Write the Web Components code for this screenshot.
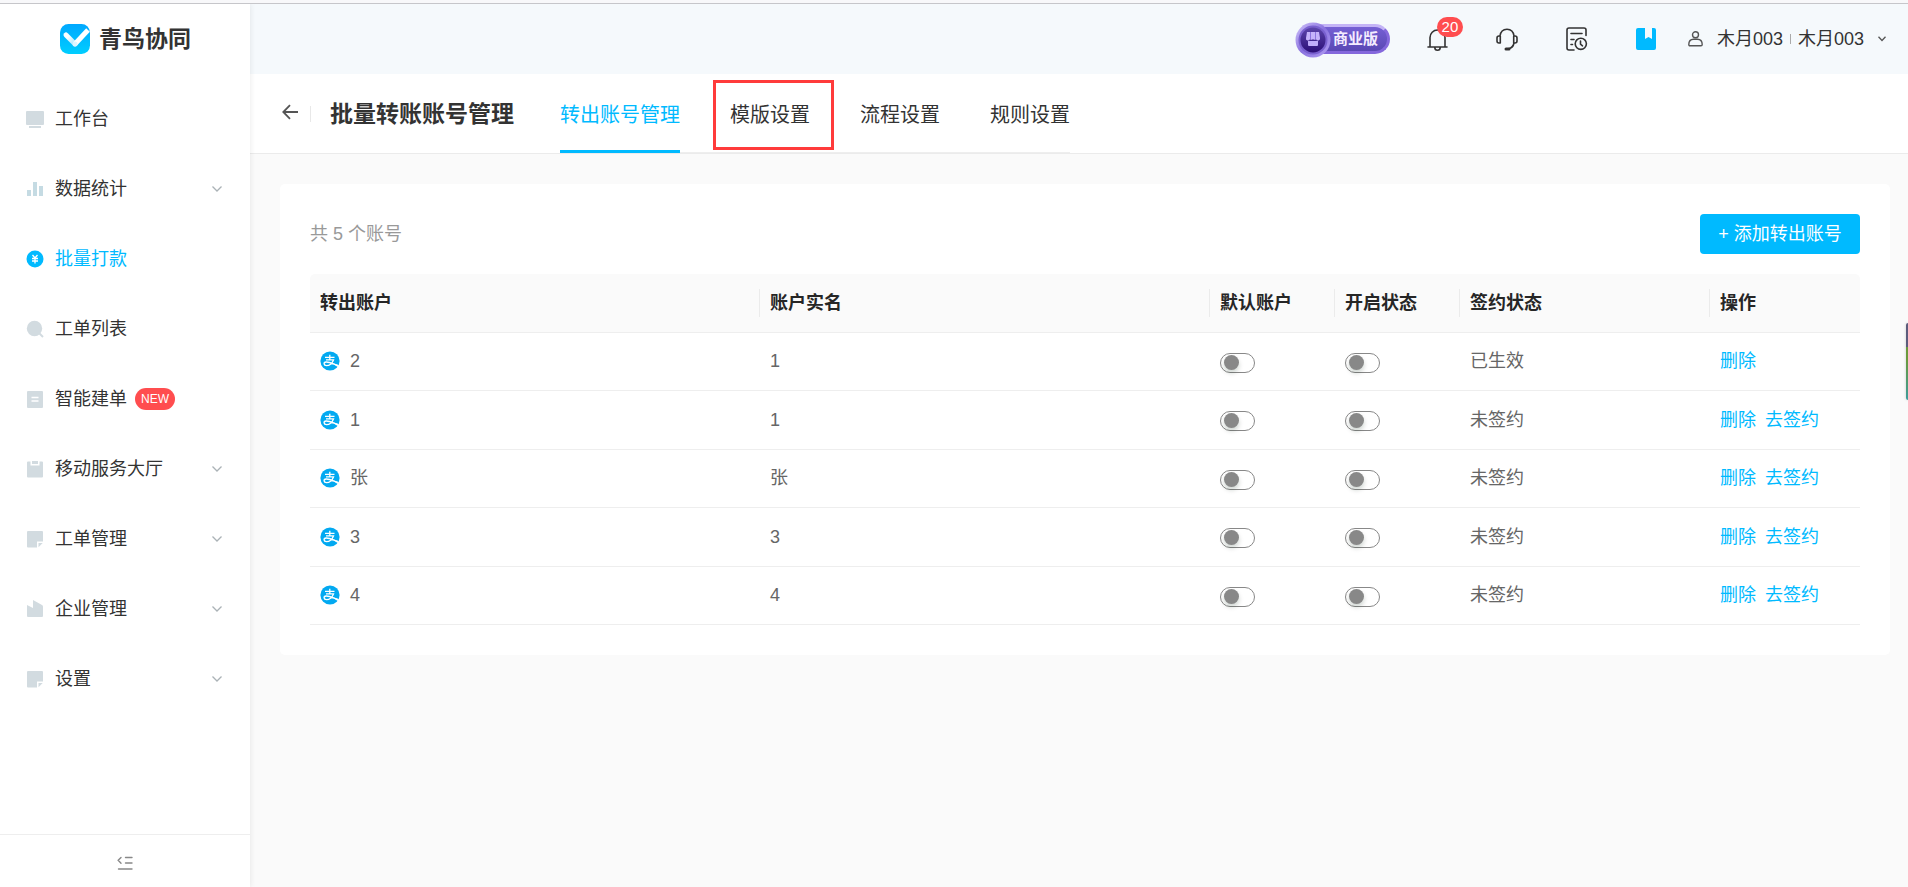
<!DOCTYPE html>
<html lang="zh-CN">
<head>
<meta charset="utf-8">
<title>批量转账账号管理</title>
<style>
  html, body { margin: 0; height: 100%; }
  body {
    font: 18px/26px "Liberation Sans", "Noto Sans CJK SC", sans-serif;
    color: #333;
    background: #fafafa;
    --brand: #00baff;
    --line: #eee;
    --danger: #ff4d4f;
  }
</style>
</head>
<body>
<app-shell>
  <side-bar slot="side">
    <nav-item icon="desk">工作台</nav-item>
    <nav-item icon="bars" expandable>数据统计</nav-item>
    <nav-item icon="coin" active>批量打款</nav-item>
    <nav-item icon="search">工单列表</nav-item>
    <nav-item icon="doc" tag="NEW">智能建单</nav-item>
    <nav-item icon="clip" expandable>移动服务大厅</nav-item>
    <nav-item icon="note" expandable>工单管理</nav-item>
    <nav-item icon="firm" expandable>企业管理</nav-item>
    <nav-item icon="note" expandable>设置</nav-item>
  </side-bar>
  <top-bar slot="top"></top-bar>
  <page-head slot="head">
    <span slot="title">批量转账账号管理</span>
    <tab-link active>转出账号管理</tab-link>
    <tab-link marked>模版设置</tab-link>
    <tab-link>流程设置</tab-link>
    <tab-link>规则设置</tab-link>
  </page-head>
  <account-card></account-card>
</app-shell>

<script>
const define = (name, html, setup) => {
  const template = document.createElement('template');
  template.innerHTML = html;
  customElements.define(name, class extends HTMLElement {
    connectedCallback() {
      if (this.shadowRoot) return;
      const root = this.attachShadow({ mode: 'open' });
      root.append(template.content.cloneNode(true));
      if (setup) setup(this, root);
    }
  });
};

define('app-shell', `
<style>
  :host { display: flex; flex-direction: column; min-height: 100vh; }
  .strip { height: 3px; background: #f8f8fa; border-bottom: 1px solid #c6c6ca; }
  .cols { flex: 1; display: grid; grid-template-columns: 250px minmax(0, 1fr); }
  .main { background: #fafafa; }
  .body { padding: 30px 18px 30px 30px; }
  .handle {
    position: fixed; right: 0; top: 323px; width: 2px; height: 77px;
    border-radius: 2px 0 0 2px;
    background: linear-gradient(#5c5c7c 24px, #6a9a3c 24px 36px, #3c9c9c);
    box-shadow: 0 0 3px #0003;
  }
</style>
<div class="strip"></div>
<div class="cols">
  <slot name="side"></slot>
  <div class="main">
    <slot name="top"></slot>
    <slot name="head"></slot>
    <div class="body"><slot></slot></div>
  </div>
</div>
<div class="handle"></div>`);

define('side-bar', `
<style>
  :host {
    display: flex; flex-direction: column; background: #fff;
    position: relative; z-index: 1; box-shadow: 0 0 6px #00000018; clip-path: inset(0 -8px 0 0);
  }
  .logo { display: flex; align-items: center; gap: 9px; height: 70px; padding: 0 60px; }
  .logo svg { flex: none; }
  .logo strong { font-size: 23px; line-height: 30px; white-space: nowrap; }
  nav { flex: 1; padding-top: 10px; }
  footer { height: 53px; padding-top: 4px; box-sizing: border-box; border-top: 1px solid var(--line); display: grid; place-items: center; }
  button { border: 0; padding: 6px; background: none; display: flex; cursor: pointer; }
</style>
<div class="logo">
  <svg width="30" height="30" viewBox="0 0 30 30" aria-hidden="true">
    <defs>
      <linearGradient id="g" x1="0" y1="0" x2="0" y2="1"><stop offset="0" stop-color="#00a8ff"/><stop offset="1" stop-color="#00ceff"/></linearGradient>
      <linearGradient id="w" x1="0" y1="0" x2="1" y2="1"><stop offset=".2" stop-color="#fff"/><stop offset="1" stop-color="#a5e5ff"/></linearGradient>
    </defs>
    <rect width="30" height="30" rx="8.500" fill="url(#g)"/>
    <path d="M6 11l9 9" stroke="url(#w)" stroke-width="5" stroke-linecap="round"/>
    <path d="M15 20L28 6" stroke="#fff" stroke-width="5"/>
    <circle cx="15" cy="20" r="2.500" fill="#dff6ff"/>
  </svg>
  <strong>青鸟协同</strong>
</div>
<nav><slot></slot></nav>
<footer>
  <button aria-label="收起菜单">
    <svg width="16" height="15" viewBox="0 0 16 15" fill="none" stroke="#888" stroke-width="1.400" stroke-linecap="round">
      <path d="M8.500 1.500H15M8.500 7H15M1.500 13H15M4 1.500L1.200 4.300 4 7.200"/>
    </svg>
  </button>
</footer>`);

const navIcons = {
  desk: '<path d="M1 1h16a1 1 0 011 1v12a1 1 0 01-1 1H1a1 1 0 01-1-1V2a1 1 0 011-1zM3 16h12v2H3z"/>',
  bars: '<path fill="#c5dbe3" d="M1 10h4v6H1zM7 2h4v14H7zM13 6h4v10h-4z"/>',
  coin: '<circle cx="9" cy="9" r="8.500"/><path d="M6.500 5L9 8l2.500-3M6 8.500h6M6 11h6M9 8v5.500" stroke="#fff" stroke-width="1.300" fill="none"/>',
  search: '<circle cx="8.500" cy="8.500" r="7.700"/><path d="M13 13l4 4" stroke="currentColor" stroke-width="2"/>',
  doc: '<path d="M2 1h14a1 1 0 011 1v15a1 1 0 01-1 1H2a1 1 0 01-1-1V2a1 1 0 011-1z"/><path d="M5.500 7.500h7M5.500 11h7" stroke="#fff" stroke-width="1.300"/>',
  clip: '<path d="M6 1h6v3H6z"/><path d="M2 1.500h2.500v4h9v-4H16a1 1 0 011 1V16.500a1 1 0 01-1 1H2a1 1 0 01-1-1V2.500a1 1 0 011-1z"/>',
  note: '<path d="M2 1h14a1 1 0 011 1v9.500h-6v6H2a1 1 0 01-1-1V2a1 1 0 011-1zM12.500 13h4.200l-4.200 4.300z"/>',
  firm: '<path d="M1 5l6 3V0l9 5a2 2 0 011 2v9a1 1 0 01-1 1H2a1 1 0 01-1-1z"/>'
};

define('nav-item', `
<style>
  :host { display: block; }
  a { display: flex; align-items: center; height: 70px; padding: 0 28px 0 26px; color: #333; text-decoration: none; white-space: nowrap; }
  .icon { flex: none; margin-right: 11px; color: #d2dbe0; fill: currentColor; }
  .tag { margin-left: 8px; width: 40px; border-radius: 11px; background: var(--danger); color: #fff; font-size: 12px; line-height: 22px; text-align: center; }
  .more { margin-left: auto; }
  :host([active]) a, :host([active]) .icon { color: var(--brand); }
</style>
<a href="#"><svg class="icon" width="18" height="18" viewBox="0 0 18 18" aria-hidden="true"></svg><slot></slot></a>`,
(host, root) => {
  const link = root.querySelector('a');
  root.querySelector('.icon').innerHTML = navIcons[host.getAttribute('icon')];
  if (host.hasAttribute('tag')) link.insertAdjacentHTML('beforeend', `<span class="tag">${host.getAttribute('tag')}</span>`);
  if (host.hasAttribute('expandable')) link.insertAdjacentHTML('beforeend',
    '<svg class="more" width="10" height="6" viewBox="0 0 10 6" fill="none" stroke="#aab2b6" stroke-width="1.300" aria-hidden="true"><path d="M.5.5L5 5 9.500.5"/></svg>');
});

define('top-bar', `
<style>
  :host { display: flex; align-items: center; justify-content: flex-end; height: 70px; padding-right: 22px; background: #f5f9fc; }
  button { position: relative; display: flex; padding: 0; border: 0; background: none; font: inherit; color: #333; cursor: pointer; }
  .plan {
    position: relative; box-sizing: border-box; height: 30px; width: 90px; margin-right: 37px; padding-left: 30px;
    border-radius: 15px; border: 3px solid #8468dc; border-top-color: #c4b4f6;
    background: linear-gradient(#7560d4, #5a48b4);
    color: #f4ecff; font-size: 15px; font-weight: bold; line-height: 24px; white-space: nowrap;
  }
  .plan svg { position: absolute; left: -8px; top: -5px; }
  .count {
    position: absolute; left: 10px; top: -11px; width: 26px; border-radius: 10px;
    background: var(--danger); color: #fff; font-size: 15px; line-height: 20px; text-align: center;
  }
  .tool { margin-right: 48px; }
  .book { margin-right: 32px; }
  .user { align-items: center; gap: 14px; white-space: nowrap; line-height: 26px; }
  .names { display: flex; align-items: center; gap: 7px; }
  .names i { width: 1px; height: 10px; background: #aaa; }
</style>
<div class="plan">
  <svg width="36" height="36" viewBox="0 0 36 36" aria-hidden="true">
    <defs>
      <linearGradient id="r" x1="0" y1="0" x2="1" y2="1"><stop offset="0" stop-color="#d2c6fb"/><stop offset=".5" stop-color="#8a72df"/><stop offset="1" stop-color="#b3a0f3"/></linearGradient>
      <linearGradient id="d" x1="0" y1="0" x2="0" y2="1"><stop offset="0" stop-color="#5c45ab"/><stop offset="1" stop-color="#2c0f78"/></linearGradient>
    </defs>
    <circle cx="18" cy="18" r="17.500" fill="url(#r)"/>
    <circle cx="18" cy="18" r="14.500" fill="#7960cf"/>
    <circle cx="18" cy="18" r="12.500" fill="url(#d)"/>
    <path d="M12 10h12l1 6a2 2 0 01-4 1 2 2 0 01-3 0 2 2 0 01-3 0 2 2 0 01-4-1z" fill="#c5b3fb"/>
    <path d="M15.500 10v7M20.500 10v7" stroke="#8c74df"/>
    <path d="M13 19h10v4a1 1 0 01-1 1h-8a1 1 0 01-1-1z" fill="#c0adfa"/>
  </svg>商业版
</div>
<button class="tool" aria-label="消息">
  <svg width="21" height="23" viewBox="0 0 21 23" fill="none" stroke="#333" stroke-width="1.600" stroke-linecap="round" stroke-linejoin="round">
    <path d="M3 19V9.500a7.500 7.500 0 0115 0V19M1 19h19M7.800 19.500a2.700 2.700 0 005.400 0"/>
  </svg>
  <span class="count">20</span>
</button>
<button class="tool" aria-label="客服">
  <svg width="22" height="23" viewBox="0 0 22 23" fill="none" stroke="#333" stroke-width="1.600" stroke-linecap="round" stroke-linejoin="round">
    <path d="M4 8C4.500 4 7 1.200 11 1.200S17.500 4 18 8M4.300 8v7H3a2 2 0 01-2-2v-3a2 2 0 012-2zM17.700 8v7H19a2 2 0 002-2v-3a2 2 0 00-2-2zM18 15c-.5 3-2.500 5-5.500 5.800"/>
    <path d="M10 21h3" stroke-width="3"/>
  </svg>
</button>
<button class="tool" aria-label="记录">
  <svg width="22" height="24" viewBox="0 0 22 24" fill="none" stroke="#333" stroke-width="1.600" stroke-linecap="round" stroke-linejoin="round">
    <path d="M20 8.500V3a2 2 0 00-2-2H3a2 2 0 00-2 2v18a2 2 0 002 2h5M5 6.500h11M5 12.500h3M5 17.500h1.500"/>
    <circle cx="14.800" cy="16.800" r="5.600"/><path d="M14.500 14v3.200l2 1.600"/>
  </svg>
</button>
<button class="book" aria-label="帮助文档">
  <svg width="20" height="22" viewBox="0 0 20 22" fill="#00baff"><path d="M2 0h7v11l3.500-2L16 11V0h2a2 2 0 012 2v18a2 2 0 01-2 2H2a2 2 0 01-2-2V2a2 2 0 012-2z"/></svg>
</button>
<button class="user">
  <svg width="15" height="16" viewBox="0 0 15 16" fill="none" stroke="#555" stroke-width="1.400" aria-hidden="true">
    <circle cx="7.500" cy="3.800" r="3"/><path d="M5.500 8.200h4c3 0 4.700 2.400 4.700 5.300 0 .8-.4 1.300-1.200 1.300H2c-.8 0-1.200-.5-1.200-1.300 0-2.900 1.700-5.300 4.700-5.300z"/>
  </svg>
  <span class="names"><span>木月003</span><i></i><span>木月003</span></span>
  <svg width="8" height="6" viewBox="0 0 8 6" fill="none" stroke="#555" stroke-width="1.300" aria-hidden="true"><path d="M.5.8L4 4.500 7.500.8"/></svg>
</button>`);

define('page-head', `
<style>
  :host { display: flex; align-items: center; height: 79px; padding-left: 30px; background: #fff; border-bottom: 1px solid #ebebeb; }
  button { display: flex; padding: 0 2px 3px; border: 0; background: none; margin-right: 10px; cursor: pointer; }
  i { width: 1px; height: 16px; background: #e8e8e8; margin-right: 19px; }
  h1 { margin: 0 46px 0 0; font-size: 23px; line-height: 30px; white-space: nowrap; }
  nav { box-sizing: border-box; display: flex; gap: 50px; height: 79px; border-bottom: 1px solid #eee; }
</style>
<button aria-label="返回">
  <svg width="16" height="16" viewBox="0 0 16 16" fill="none" stroke="#555" stroke-width="1.800"><path d="M16 8H1.500M8 1.200L1.300 8 8 14.800"/></svg>
</button>
<i></i>
<h1><slot name="title"></slot></h1>
<nav><slot></slot></nav>`);

define('tab-link', `
<style>
  :host { display: block; position: relative; }
  a { display: block; height: 76px; line-height: 82px; font-size: 20px; color: #333; text-decoration: none; white-space: nowrap; }
  :host([active]) a { color: var(--brand); border-bottom: 3px solid var(--brand); }
  :host([marked])::after { content: ""; position: absolute; inset: 6px -24px 2px -17px; border: 3px solid #ff3b3b; pointer-events: none; }
</style>
<a href="#"><slot></slot></a>`);

define('toggle-switch', `
<style>
  :host { display: block; height: 20px; padding-top: 3px; }
  input {
    appearance: none; display: block; box-sizing: border-box; margin: 0; width: 35px; height: 20px; padding: 1px 3px;
    border: 1px solid #888; border-radius: 10px; background: #fff; cursor: pointer;
  }
  input::before { content: ""; display: block; width: 15px; height: 15px; border-radius: 50%; background: #888; box-shadow: 0 3px 5px #00231133; }
  input:checked { padding-left: 15px; }
</style>
<input type="checkbox" role="switch">`,
(host, root) => root.querySelector('input').setAttribute('aria-label', host.getAttribute('label')));

define('account-card', `
<style>
  :host { display: block; padding: 30px; background: #fff; border-radius: 5px; }
  header { display: flex; align-items: center; justify-content: space-between; margin-bottom: 20px; color: #999; }
  button { height: 40px; width: 160px; padding: 0; border: 0; border-radius: 4px; background: var(--brand); color: #fff; font: inherit; white-space: nowrap; cursor: pointer; }
  table { width: 100%; table-layout: fixed; border-collapse: separate; border-spacing: 0; color: #666; }
  th, td { box-sizing: border-box; padding: 0 10px; text-align: left; border-bottom: 1px solid #eee; white-space: nowrap; }
  th {
    height: 59px; color: #262626;
    background: linear-gradient(#ebebeb, #ebebeb) right center / 1px 28px no-repeat #fafafa;
  }
  th:first-child { border-top-left-radius: 5px; }
  th:last-child { border-top-right-radius: 5px; background: #fafafa; }
  td { height: 58px; padding-bottom: 1px; }
  tr:nth-child(even) td { height: 59px; }
  .switch { width: 125px; }
  .state { width: 250px; }
  .action { width: 150px; }
  .name { display: flex; align-items: center; gap: 10px; }
  .ops { display: flex; gap: 9px; }
  .ops a { color: var(--brand); text-decoration: none; }
</style>
<header><span>共 5 个账号</span><button>+ 添加转出账号</button></header>
<table>
  <colgroup><col><col><col class="switch"><col class="switch"><col class="state"><col class="action"></colgroup>
  <thead><tr><th>转出账户</th><th>账户实名</th><th>默认账户</th><th>开启状态</th><th>签约状态</th><th>操作</th></tr></thead>
  <tbody></tbody>
</table>`,
(host, root) => {
  const alipay = `<svg width="20" height="20" viewBox="0 0 20 20" aria-hidden="true">
    <circle cx="10" cy="10" r="9.600" fill="#02a9f1"/>
    <g fill="none" stroke="#fff" stroke-width="1.300">
      <path d="M5 6.300h9.500M9.800 3.800v5M6 8.900h7.500c-1.200 3-3.600 5.700-7 5.700-3 0-3.300-3.300-.4-3.600 3.300-.3 7 2 12.500 4"/>
    </g>
    <path d="M12 12l6.900 2-1.300 2z" fill="#fff"/>
  </svg>`;
  const rows = [['2', '1', true], ['1', '1'], ['张', '张'], ['3', '3'], ['4', '4']];
  root.querySelector('tbody').innerHTML = rows.map(([account, owner, signed]) => `<tr>
    <td><span class="name">${alipay}${account}</span></td><td>${owner}</td>
    <td><toggle-switch label="默认账户 ${account}"></toggle-switch></td>
    <td><toggle-switch label="开启状态 ${account}"></toggle-switch></td>
    <td>${signed ? '已生效' : '未签约'}</td>
    <td><span class="ops"><a href="#">删除</a>${signed ? '' : '<a href="#">去签约</a>'}</span></td>
  </tr>`).join('');
});
</script>
</body>
</html>
